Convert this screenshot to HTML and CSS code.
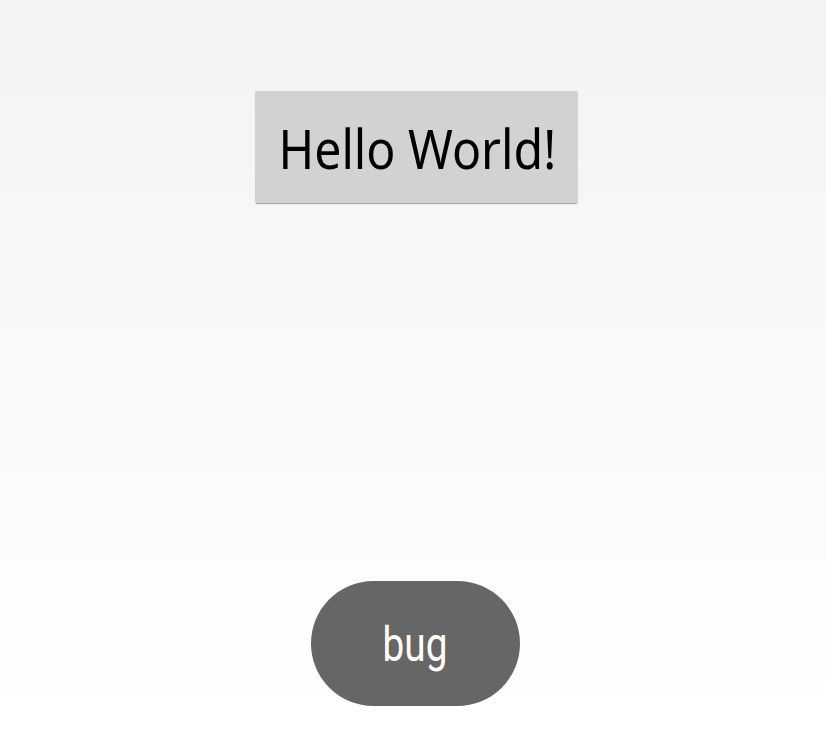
FILE: index.html
```html
<!DOCTYPE html>
<html>
<head>
<meta charset="utf-8">
<link rel="stylesheet" href="styles.css">
</head>
<body>
<main class="screen">
  <div class="hello"><span class="hello-text">Hello World!</span></div>
  <div class="bug"><span class="bug-text">bug</span></div>
</main>
</body>
</html>
```

FILE: styles.css
```css
html, body {
  margin: 0;
  padding: 0;
}
body {
  width: 826px;
  height: 730px;
  overflow: hidden;
  background: linear-gradient(to bottom, #f3f3f3 0%, #fdfdfd 85%, #ffffff 100%);
  font-family: Roboto, "Noto Sans", sans-serif;
}
.screen {
  height: 730px;
  display: flex;
  flex-direction: column;
  align-items: center;
  justify-content: space-between;
  padding: 91px 0 24px;
  box-sizing: border-box;
}
.hello {
  width: 323px;
  height: 112px;
  margin-left: 7px;
  background: #d2d2d2;
  border-radius: 2px;
  box-shadow: 0 2px 1px -1px rgba(0,0,0,0.35), 0 0 1px rgba(0,0,0,0.15);
  display: flex;
  align-items: center;
  justify-content: center;
}
.hello-text {
  display: inline-block;
  font-family: "Noto Sans", "Open Sans", sans-serif;
  font-size: 55px;
  color: #000;
  transform: scaleX(0.877);
  white-space: nowrap;
  margin-left: 2px;
}
.bug {
  width: 209px;
  height: 125px;
  margin-left: 5px;
  border-radius: 63px;
  background: #666666;
  display: flex;
  align-items: center;
  justify-content: center;
}
.bug-text {
  display: inline-block;
  font-size: 49px;
  color: #fff;
  transform: scaleX(0.79);
  margin-top: 2px;
}
```
